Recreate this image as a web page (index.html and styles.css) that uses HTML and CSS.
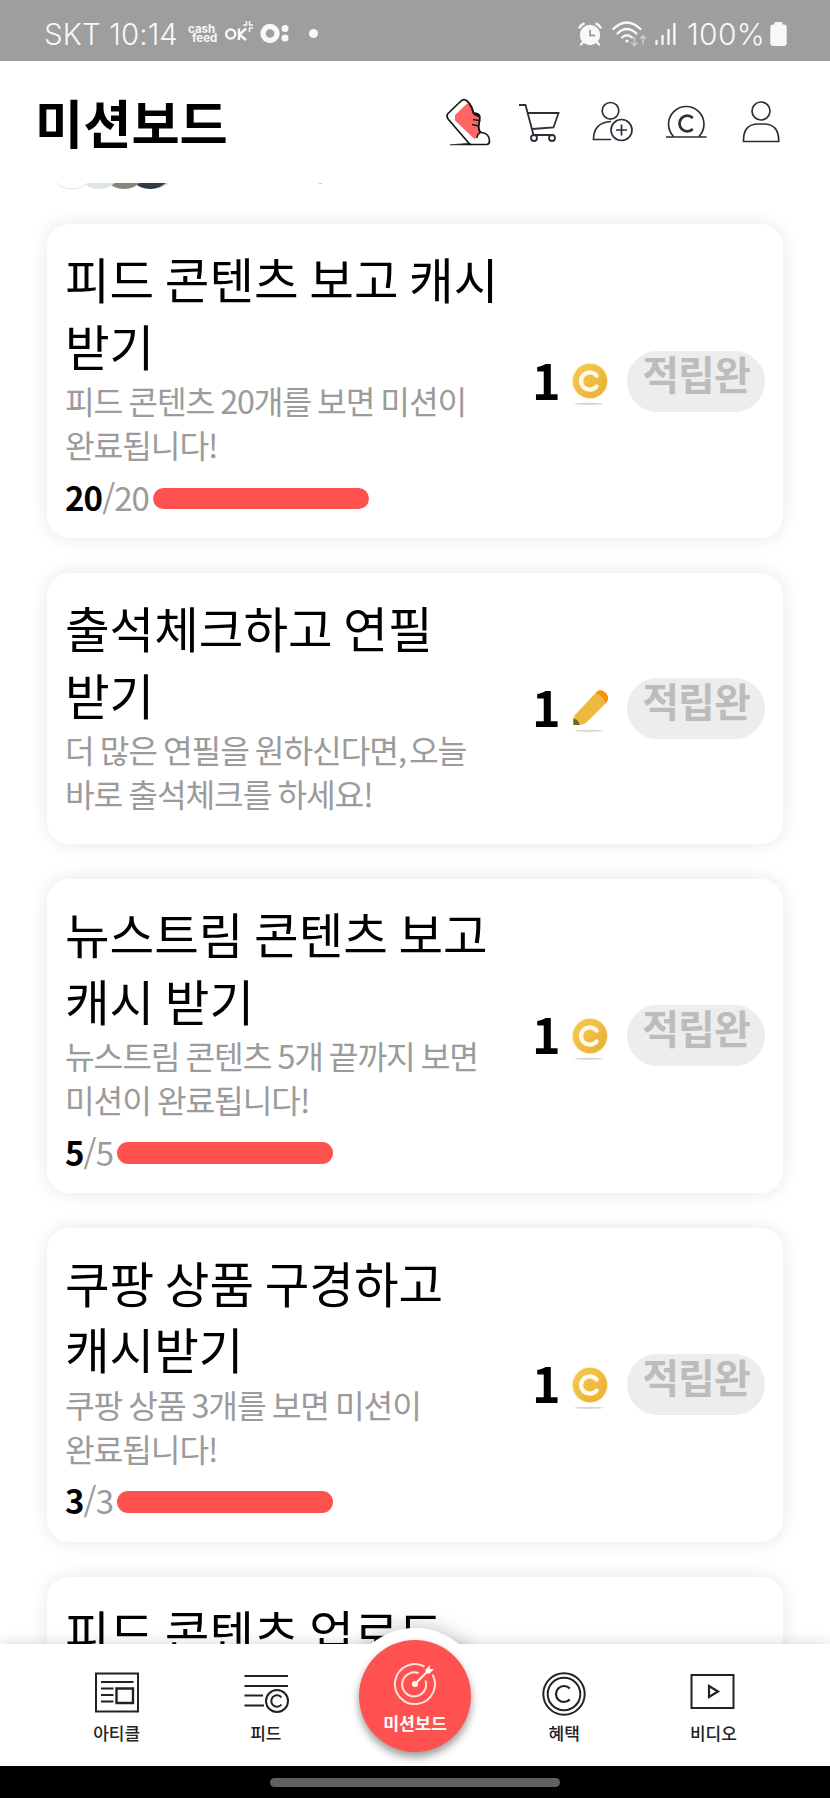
FILE: index.html
```html
<!DOCTYPE html>
<html lang="ko">
<head>
<meta charset="utf-8">
<title>미션보드</title>
<link rel="stylesheet" href="styles.css">
</head>
<body>
<svg class="defs" width="0" height="0" aria-hidden="true">
  <defs>
    <linearGradient id="gold" x1="0" y1="0" x2="1" y2="1"><stop offset="0" stop-color="#f6cb55"/><stop offset="1" stop-color="#e8ad33"/></linearGradient>
    <symbol id="coin" viewBox="0 0 40 50">
      <circle cx="20" cy="20" r="18.4" fill="#fff6d2"/>
      <circle cx="20" cy="20" r="17.2" fill="url(#gold)"/>
      <path d="M26.6 14.6A8.7 8.7 0 1 0 26.6 25.4" fill="none" stroke="#fffbe8" stroke-width="4.2" stroke-linecap="round"/>
      <ellipse cx="19" cy="42.8" rx="14.5" ry="1.1" fill="#d9d7d2"/>
    </symbol>
    <symbol id="pencil" viewBox="0 0 40 50">
      <path d="M3.400 37V30.500L4.500 27.500L26 4.500Q29 1.500 32 2.600Q38.500 5.500 38 11.500L36 15L17 34Q14 36.800 9.800 36.900Z" fill="#efb93f"/>
      <path d="M25.500 5Q29 1.200 32 2.600Q38.500 5.500 38 11.500Q37.500 13.500 35.500 15.500Q34 8 25.500 5Z" fill="#f6920f"/>
      <path d="M3.400 30.500Q8.500 31.500 9.800 36.900L3.400 37Z" fill="#7b6226"/>
      <ellipse cx="19" cy="42.800" rx="14.500" ry="1.100" fill="#ded7d2"/>
    </symbol>
  </defs>
</svg>

<div class="screen">
  <div class="status">
    <span class="status-time">SKT 10:14</span>
    <span class="cashfeed"><span>cash</span><span class="feed">feed</span></span>
    <svg class="ok" width="29" height="21" viewBox="0 0 29 21" fill="none" stroke="#f8f8f8" stroke-width="2.400"><circle cx="5.700" cy="14" r="4.600"/><path d="M14 8.500V20M21 8.500L14.500 14.500L21 20"/><path d="M18 5h3.500V1M28 5h-3.500V1M24.500 12V8H28" stroke-width="1.500"/></svg>
    <svg class="odot" width="30" height="21" viewBox="0 0 30 21" fill="#f8f8f8"><circle cx="10" cy="10.500" r="7" fill="none" stroke="#f8f8f8" stroke-width="5.400"/><circle cx="25" cy="5.500" r="3.500"/><circle cx="25" cy="15" r="3.500"/></svg>
    <i class="dot"></i>
    <svg class="alarm" width="24" height="24" viewBox="0 0 24 24" fill="none" stroke="#f8f8f8" stroke-linecap="round"><circle cx="12" cy="13" r="10.200" fill="#f8f8f8" stroke="none"/><path d="M1.500 5.500Q3 3 5.700 1.700M22.500 5.500Q21 3 18.300 1.700" stroke-width="2.400"/><path d="M5 20L3 22.600M19 20L21 22.600" stroke-width="2.200"/><path d="M12 8.300V13.500H16.500" stroke="#9e9e9e" stroke-width="1.800"/></svg>
    <svg class="wifi" width="35" height="26" viewBox="0 0 35 26" fill="none" stroke="#f8f8f8" stroke-width="2.300" stroke-linecap="round"><path d="M1.300 8Q14.500 -5 28.500 8M5.500 12.500Q14.500 3.500 24.500 12.500M10 16.500Q15 12 20 16.500"/><circle cx="15" cy="20" r="1.600" fill="#f8f8f8" stroke="none"/><path d="M22.500 16.500V24.500M19.800 22L22.500 24.700L25.200 22M31 23V15M28.300 17.500L31 14.800L33.700 17.500" stroke="#c9c9c9" stroke-width="1.700"/></svg>
    <svg class="signal" width="21" height="24" viewBox="0 0 21 24" stroke="#f8f8f8" stroke-width="2.300" stroke-linecap="round"><path d="M1.500 19v3M7.500 14v8M13.500 8v14M19.400 2v20"/></svg>
    <span class="status-pct">100%</span>
    <svg class="battery" width="17" height="24" viewBox="0 0 17 24" fill="#f8f8f8"><rect x="4.500" y="0" width="8" height="5" rx="1.300"/><rect x=".3" y="2.500" width="16.400" height="21.500" rx="3"/></svg>
  </div>

  <header class="header">
    <h1>미션보드</h1>
    <div class="header-icons">
      <svg class="shoe" width="45" height="48" viewBox="0 0 45 48" fill="none" stroke="#151515" stroke-width="1.700" stroke-linejoin="round"><path d="M40.500 46.500H24L2.500 21.500Q-.2 18 2 15.500L15 3Q18 .3 21 3Q26 7.500 27.500 15.500Q32 15 33.500 18Q34 23 32.500 28Q32.500 33 35.500 34.500Q43.500 35.500 43.500 43Q43.500 46.500 40.500 46.500Z" fill="#fff"/><path d="M23 4.500Q21 5.500 19 7.500L9 17V22.500L29 41.500L31 36.500L33 34.500Q31.500 32 31.700 28L33 18L27.500 15.500Q26.500 9 23 4.500Z" fill="#ff6663" stroke="none"/><path d="M23 5Q26.500 10 27.500 15.500Q32 15 33.500 18Q34 23 32.500 28Q32.500 33 34.500 34.500Q31 36 31 40M27 21.500L33 22.500M26 26.500L32.500 28M28 16.500L33.500 18.500"/><path d="M4 46.800L24 45.200L25 47Z" fill="#151515" stroke-width=".6"/></svg>
      <svg class="cart" width="42" height="40" viewBox="0 0 42 40" fill="none" stroke="#2d2f38" stroke-width="1.800"><path d="M1 3H7.500L15.500 33H36M10 11H40.500L35.500 25.500L14 27"/><circle cx="16" cy="36" r="3"/><circle cx="34" cy="36" r="3"/></svg>
      <svg class="invite" width="42" height="42" viewBox="0 0 42 42" fill="none" stroke="#2d2f38" stroke-width="1.700"><circle cx="18.500" cy="9.800" r="8.300"/><path d="M19 38.500H1.500Q1.500 21.500 19 20.500"/><circle cx="29.500" cy="29" r="10.500"/><path d="M29.500 23.500V34.500M24 29H35"/></svg>
      <svg class="cash" width="42" height="34" viewBox="0 0 42 34" fill="none" stroke="#2d2f38" stroke-width="1.700"><path d="M1 32H41.500M8.500 31.500A17.700 17.700 0 1 1 34 31.500"/><path d="M27.800 13A7.800 7.800 0 1 0 27.800 24" stroke-width="2.700"/></svg>
      <svg class="me" width="38" height="42" viewBox="0 0 38 42" fill="none" stroke="#2d2f38" stroke-width="1.700"><circle cx="19" cy="10" r="9"/><path d="M1.500 40.500Q1 23 16 23H22Q37 23 36.700 40.500Z"/></svg>
    </div>
  </header>

  <main class="list">
    <svg class="avatars" width="300" height="8" viewBox="0 0 300 8"><circle cx="102" cy="-18" r="24" fill="#dcd5ef"/><circle cx="99" cy="-18" r="24" fill="#2f3d4b"/><circle cx="73" cy="-18" r="24" fill="#89857c"/><circle cx="48" cy="-18" r="24" fill="#dce6ea"/><circle cx="21" cy="-18" r="24" fill="#fff" stroke="#e5e5e5"/><path d="M268 .5h3" stroke="#ccc"/></svg>

    <article class="card">
      <div class="info">
        <h2>피드 콘텐츠 보고 캐시<br>받기</h2>
        <p>피드 콘텐츠 20개를 보면 미션이<br>완료됩니다!</p>
        <div class="progress"><span class="count"><b>20</b>/20</span><i class="bar"></i></div>
      </div>
      <b class="amount">1</b><svg class="reward"><use href="#coin"/></svg><button class="pill">적립완</button>
    </article>

    <article class="card short">
      <div class="info">
        <h2>출석체크하고 연필<br>받기</h2>
        <p>더 많은 연필을 원하신다면<span class="comma">,</span> 오늘<br>바로 출석체크를 하세요!</p>
      </div>
      <b class="amount">1</b><svg class="reward"><use href="#pencil"/></svg><button class="pill">적립완</button>
    </article>

    <article class="card">
      <div class="info">
        <h2>뉴스트림 콘텐츠 보고<br>캐시 받기</h2>
        <p>뉴스트림 콘텐츠 5개 끝까지 보면<br>미션이 완료됩니다!</p>
        <div class="progress"><span class="count"><b>5</b>/5</span><i class="bar"></i></div>
      </div>
      <b class="amount">1</b><svg class="reward"><use href="#coin"/></svg><button class="pill">적립완</button>
    </article>

    <article class="card">
      <div class="info">
        <h2>쿠팡 상품 구경하고<br>캐시받기</h2>
        <p>쿠팡 상품 3개를 보면 미션이<br>완료됩니다!</p>
        <div class="progress"><span class="count"><b>3</b>/3</span><i class="bar"></i></div>
      </div>
      <b class="amount">1</b><svg class="reward"><use href="#coin"/></svg><button class="pill">적립완</button>
    </article>

    <article class="card">
      <div class="info"><h2>피드 콘텐츠 업로드</h2></div>
    </article>
  </main>

  <nav class="nav">
    <a class="tab"><svg width="44" height="46" viewBox="0 0 44 46" fill="none" stroke="#222" stroke-width="2"><path d="M1 3.500H43V41.500H1ZM6 12H38.500M6 18.500H18.500M6 25H18.500M6 31.500H18.500"/><path d="M21.500 18.500H38V33H21.500Z" stroke-width="2.400"/></svg><span>아티클</span></a>
    <a class="tab"><svg width="46" height="46" viewBox="0 0 46 46" fill="none" stroke="#222" stroke-width="2"><path d="M1.500 6H45M1.500 16H45M1.500 25.500H20M1.500 35.500H21"/><circle cx="34" cy="31" r="11"/><path d="M38.500 27.500A5.700 5.700 0 1 0 38.500 34.500"/></svg><span>피드</span></a>
    <a class="tab active">
      <span class="fab"><svg width="44" height="44" viewBox="0 0 44 44" fill="none" stroke="#ffe4e3" stroke-width="2"><path d="M31.500 4.500A20 20 0 1 0 39.500 12.500"/><path d="M25.500 11.200A12 12 0 1 0 32.500 18.500"/><circle cx="22" cy="22" r="3" fill="#fff" stroke="none"/><path d="M22 22L33 11" stroke="#fff"/><path d="M32.500 11.500V7.500L37 3V7H41L36.500 11.500Z" fill="#fff" stroke="none"/></svg><span>미션보드</span></span>
    </a>
    <a class="tab"><svg width="46" height="46" viewBox="0 0 46 46" fill="none" stroke="#222" stroke-width="2"><circle cx="23" cy="24" r="20.700"/><circle cx="23" cy="24" r="16.300"/><path d="M28.800 18.500A8 8 0 1 0 28.800 29.500" stroke-width="2.200"/></svg><span>혜택</span></a>
    <a class="tab"><svg width="46" height="46" viewBox="0 0 46 46" fill="none" stroke="#222" stroke-width="2"><path d="M1.500 5H43.500V38H1.500Z"/><path d="M19 16L28 21.500L19 27Z" stroke-width="2.200"/></svg><span>비디오</span></a>
  </nav>
  <div class="gesture"><i></i></div>
</div>
</body>
</html>
```

FILE: styles.css
```css
* { box-sizing: border-box; }
body, h1, h2, p { margin: 0; }
body { background: #fff; font-family: "Noto Sans CJK KR", sans-serif; color: #000; }
.defs { position: absolute; }
.screen { width: 830px; height: 1798px; display: flex; flex-direction: column; overflow: hidden; }
svg, i { display: block; flex: none; }

.status { height: 61px; flex: none; background: #9e9e9e; display: flex; align-items: center; padding: 6px 43px 0 44px; color: #f8f8f8; font-family: Inter, sans-serif; white-space: nowrap; }
.status-time { width: 135px; font-size: 29.5px; font-weight: 300; letter-spacing: .1px; }
.cashfeed { width: 32px; margin-left: 9px; display: flex; flex-direction: column; font-size: 11.5px; line-height: 8.500px; font-weight: 700; }
.feed { padding-left: 4px; }
.ok { margin: -6px 0 0 5px; }
.odot { margin-left: 6px; }
.dot { width: 9px; height: 9px; border-radius: 50%; background: #f8f8f8; margin-left: 19px; }
.alarm { margin-left: auto; }
.wifi { margin-left: 10px; }
.signal { margin-left: 8px; }
.status-pct { width: 80px; margin-left: 11px; font-size: 30px; font-weight: 300; letter-spacing: .3px; }
.battery { margin-left: 3px; }

.header { height: 122px; flex: none; display: flex; align-items: center; justify-content: space-between; padding: 0 50px 0 35px; background: #fff; }
h1 { font-size: 52.4px; line-height: 76px; font-weight: 700; margin-top: -3px; }
.header-icons { display: flex; align-items: center; }
.cart { margin-left: 27px; }
.invite { margin-left: 32px; }
.cash { margin-left: 31px; }
.me { margin-left: 35px; }

.list { flex: 1; min-height: 0; overflow: hidden; padding: 0 47px; display: flex; flex-direction: column; }
.avatars { margin: 0 0 33px 4px; flex: none; }
.card { width: 736px; height: 314px; flex: none; margin-bottom: 34.900px; padding: 21px 18px 0; border-radius: 22px; background: #fff; box-shadow: 0 0 18px rgba(0,0,0,.1); display: flex; }
.card.short { height: 271px; }
.info { width: 468px; flex: none; white-space: nowrap; }
h2 { font-size: 48.5px; line-height: 66.8px; font-weight: 400; word-spacing: -3px; }
p { margin-top: -.6px; font-size: 32.3px; line-height: 44.4px; letter-spacing: -1.100px; word-spacing: -1.900px; color: #9b9b9b; }
.comma { letter-spacing: -4px; }
.progress { display: flex; align-items: center; gap: 4px; margin-top: 8px; height: 44px; }
.count { font-size: 33px; line-height: 44px; letter-spacing: -.9px; color: #9b9b9b; }
.count b { color: #000; }
.bar { width: 216px; height: 21.500px; border-radius: 11px; background: #ff514f; margin-top: 3px; }
.amount, .reward, .pill { align-self: center; margin-top: -21px; flex: none; }
.amount { width: 29px; margin: -26px 0 0 -1px; font-size: 48.5px; line-height: 60px; }
.reward { width: 40px; height: 50px; margin: -11px 0 0 9px; }
.pill { width: 138px; height: 61px; margin-left: auto; padding: 0; border: 0; border-radius: 31px; background: #ededed; color: #bcbcbc; font: 700 40px/45px "Noto Sans CJK KR", sans-serif; letter-spacing: -1px; display: flex; justify-content: center; }

.nav { position: relative; z-index: 1; height: 122px; flex: none; display: flex; padding: 0 42px; background: #fff; box-shadow: 0 0 14px rgba(0,0,0,.16); }
.tab { flex: 1; display: flex; flex-direction: column; align-items: center; padding-top: 26px; font-size: 17px; line-height: 26px; font-weight: 500; color: #222; }
.tab > span:not(.fab) { margin-top: 4px; }
.tab.active { padding: 0; margin-top: -16px; position: relative; }
.tab.active::before { content: ""; position: absolute; z-index: -1; top: 0; left: 7px; width: 136px; height: 136px; border-radius: 50%; background: #fff; box-shadow: 0 0 22px rgba(0,0,0,.25); clip-path: inset(-40px -40px 120px -40px); }
.fab { width: 112px; height: 112px; margin-top: 12px; padding-top: 22px; border-radius: 50%; background: #ff514f; box-shadow: 0 5px 9px rgba(0,0,0,.4); display: flex; flex-direction: column; align-items: center; color: #fff; font-size: 17.300px; font-weight: 700; }
.fab > span { margin-top: 4px; }
.gesture { position: relative; z-index: 2; height: 32px; flex: none; background: #000; display: flex; justify-content: center; padding-top: 12px; }
.gesture i { width: 290px; height: 9px; border-radius: 5px; background: #606060; }
```
